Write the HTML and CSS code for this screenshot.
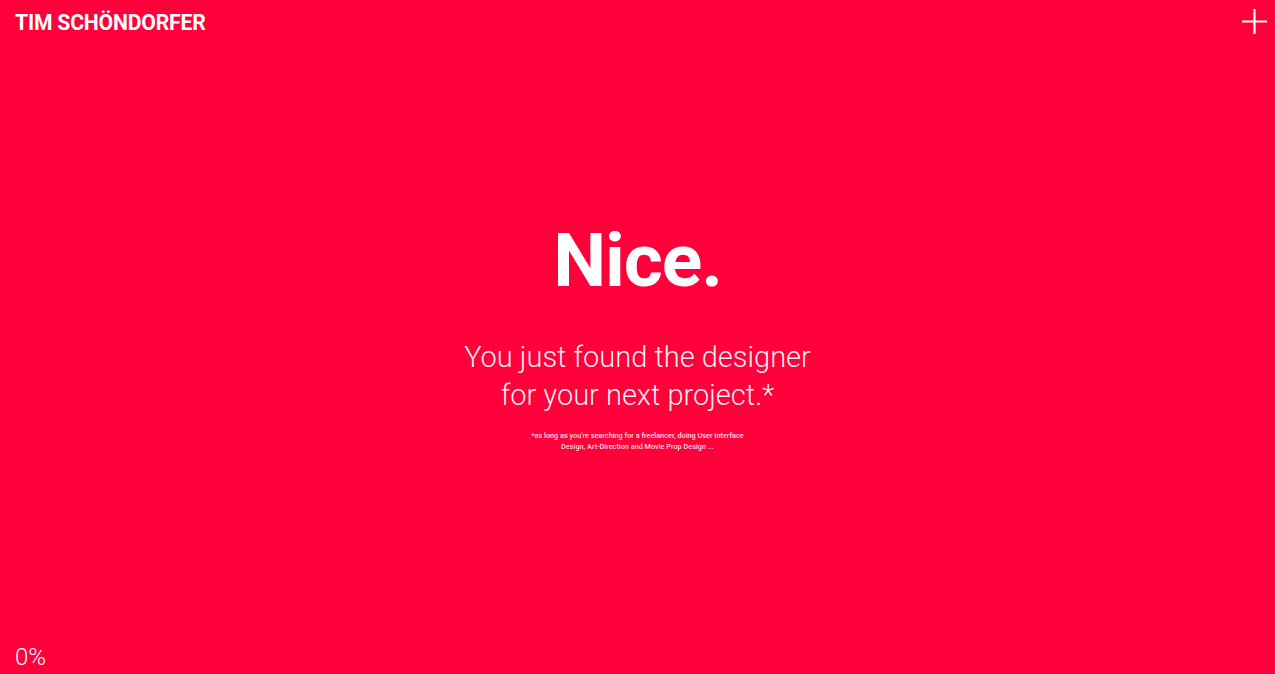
FILE: index.html
```
<!DOCTYPE html>
<html>
<head>
<meta charset="utf-8">
<link rel="stylesheet" href="styles.css">
</head>
<body>
<div class="page">
  <header class="top">
    <div class="logo">TIM SCHÖNDORFER</div>
    <div class="menu">
      <svg width="25" height="25" viewBox="0 0 25 25"><path d="M12.5 0V25M0 12.5H25" stroke="#fff" stroke-width="2.2" fill="none"/></svg>
    </div>
  </header>
  <main class="hero">
    <h1 class="nice">Nice.</h1>
    <p class="sub">You just found the designer<br>for your next project.*</p>
    <p class="note">*as long as you're searching for a freelancer, doing User Interface<br>Design, Art-Direction and Movie Prop Design ...</p>
  </main>
  <footer class="bottom">0%</footer>
</div>
</body>
</html>
```
FILE: styles.css
```
html, body {
  margin: 0;
  padding: 0;
  height: 100%;
}
body {
  background: #ff003b;
  color: #fff;
  font-family: Roboto, "Liberation Sans", sans-serif;
  overflow: hidden;
}
.page {
  height: 674px;
  display: flex;
  flex-direction: column;
}
.top {
  display: flex;
  justify-content: space-between;
  align-items: flex-start;
  padding: 10px 8px 0 15px;
  height: 39px;
}
.logo {
  font-weight: 700;
  font-size: 21.2px;
  letter-spacing: -0.2px;
  line-height: 26px;
}
.menu {
  line-height: 0;
  margin-top: -1px;
}
.hero {
  flex: 1;
  display: flex;
  flex-direction: column;
  align-items: center;
  text-align: center;
  padding-top: 174px;
}
.nice {
  margin: 0;
  font-size: 75px;
  font-weight: 700;
  line-height: 74px;
  letter-spacing: -1.1px;
}
.sub {
  margin: 41px 0 0;
  font-size: 29px;
  font-weight: 300;
  line-height: 38px;
  color: rgba(255,255,255,0.95);
}
.note {
  margin: 17px 0 0;
  font-size: 7.3px;
  font-weight: 500;
  line-height: 10.5px;
  color: rgba(255,255,255,0.88);
}
.bottom {
  padding: 0 0 2px 15px;
  font-size: 24px;
  font-weight: 300;
  line-height: 30px;
  height: 30px;
}
```
